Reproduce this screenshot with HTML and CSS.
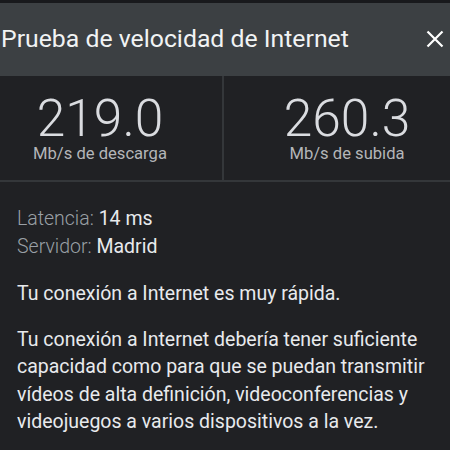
FILE: index.html
```html
<!DOCTYPE html>
<html lang="es">
<head>
    <meta charset="UTF-8">
    <meta name="viewport" content="width=device-width, initial-scale=1.0">
    <title>Prueba de velocidad de Internet</title>
    <link rel="stylesheet" href="styles.css">
</head>
<body>
    <div class="topbar"></div>
    <div class="header">
        <h1 class="title">Prueba de velocidad de Internet</h1>
        <button class="close" aria-label="Cerrar">
            <svg width="18" height="18" viewBox="0 0 18 18"><path d="M1.5 1.5 L16.5 16.5 M16.5 1.5 L1.5 16.5" stroke="#fff" stroke-width="2.2" fill="none"/></svg>
        </button>
    </div>
    <div class="stats">
        <div class="stat stat-down">
            <div class="stat-value">219.0</div>
            <div class="stat-label">Mb/s de descarga</div>
        </div>
        <div class="stat stat-up">
            <div class="stat-value">260.3</div>
            <div class="stat-label">Mb/s de subida</div>
        </div>
    </div>
    <div class="details">
        <div class="meta">
            <div><span class="meta-key">Latencia:</span> 14 ms</div>
            <div><span class="meta-key">Servidor:</span> Madrid</div>
        </div>
        <p class="summary">Tu conexión a Internet es muy rápida.</p>
        <p class="summary">Tu conexión a Internet debería tener suficiente capacidad como para que se puedan transmitir vídeos de alta definición, videoconferencias y videojuegos a varios dispositivos a la vez.</p>
    </div>
</body>
</html>
```

FILE: styles.css
```css
body { margin: 0; background: #202124; font-family: Roboto, "Noto Sans", sans-serif; color: #e8eaed; }
.topbar { height: 3px; background: #18191c; }
.header { height: 73px; background: #3c4043; display: flex; align-items: center; justify-content: space-between; padding: 0 6px 0 1px; }
.title { margin: 0 0 2px; font-size: 24.8px; font-weight: 400; color: #f1f3f4; }
.close { background: none; border: none; padding: 0; width: 18px; height: 18px; margin-bottom: 2px; cursor: pointer; }
.close svg { display: block; }
.stats { display: grid; grid-template-columns: 224px 1fr; height: 104px; border-bottom: 2px solid #34373a; }
.stat { display: flex; flex-direction: column; align-items: center; padding-top: 17px; }
.stat-down { padding-right: 22px; border-right: 2px solid #34373a; }
.stat-up { padding-left: 20px; }
.stat-value { font-size: 51.5px; font-weight: 300; line-height: 52px; color: #dadce0; }
.stat-label { font-size: 16.6px; line-height: 18px; color: #b4b6b9; }
.details { padding: 23px 17px 0; }
.meta { font-size: 19.5px; line-height: 28px; }
.meta-key { color: #9aa0a6; font-weight: 300; }
.summary { margin: 18.5px 0 0; font-size: 19.5px; line-height: 27.5px; }
```
